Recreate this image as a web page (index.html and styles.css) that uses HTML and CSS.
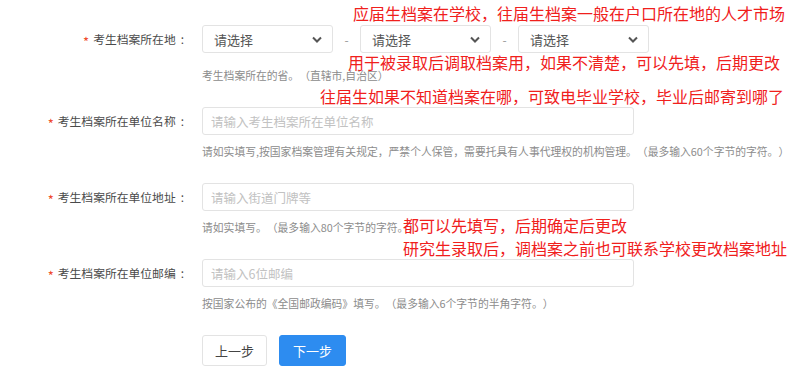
FILE: index.html
```html
<!DOCTYPE html>
<html lang="zh-CN">
<head>
  <meta charset="UTF-8" />
  <meta name="viewport" content="width=device-width, initial-scale=1.0"/>
  <title>考生档案信息</title>
  <link rel="stylesheet" href="styles.css">
</head>
<body>
  <div class="page">
    <form class="form">
      <div class="row">
        <label class="label"><span class="req">*</span>考生档案所在地<span class="colon">:</span></label>
        <div class="field">
          <div class="selects">
            <div class="select">请选择<svg class="arrow" width="10" height="7" viewBox="0 0 10 7"><polyline points="1,1.5 5,5.5 9,1.5" /></svg></div>
            <span class="dash">-</span>
            <div class="select">请选择<svg class="arrow" width="10" height="7" viewBox="0 0 10 7"><polyline points="1,1.5 5,5.5 9,1.5" /></svg></div>
            <span class="dash">-</span>
            <div class="select">请选择<svg class="arrow" width="10" height="7" viewBox="0 0 10 7"><polyline points="1,1.5 5,5.5 9,1.5" /></svg></div>
          </div>
          <p class="hint hint-first">考生档案所在的省。（直辖市,自治区）</p>
        </div>
      </div>

      <div class="row">
        <label class="label"><span class="req">*</span>考生档案所在单位名称<span class="colon">:</span></label>
        <div class="field">
          <input class="input" type="text" placeholder="请输入考生档案所在单位名称">
          <p class="hint">请如实填写,按国家档案管理有关规定，严禁个人保管，需要托具有人事代理权的机构管理。（最多输入60个字节的字符。）</p>
        </div>
      </div>

      <div class="row">
        <label class="label"><span class="req">*</span>考生档案所在单位地址<span class="colon">:</span></label>
        <div class="field">
          <input class="input" type="text" placeholder="请输入街道门牌等">
          <p class="hint">请如实填写。（最多输入80个字节的字符。）</p>
        </div>
      </div>

      <div class="row">
        <label class="label"><span class="req">*</span>考生档案所在单位邮编<span class="colon">:</span></label>
        <div class="field">
          <input class="input" type="text" placeholder="请输入6位邮编">
          <p class="hint">按国家公布的《全国邮政编码》填写。（最多输入6个字节的半角字符。）</p>
        </div>
      </div>

      <div class="actions">
        <button type="button" class="btn">上一步</button>
        <button type="button" class="btn btn-primary">下一步</button>
      </div>
    </form>

    <!-- 截图上的红字批注 -->
    <p class="note note-1">应届生档案在学校，往届生档案一般在户口所在地的人才市场</p>
    <p class="note note-2">用于被录取后调取档案用，如果不清楚，可以先填，后期更改</p>
    <p class="note note-3">往届生如果不知道档案在哪，可致电毕业学校，毕业后邮寄到哪了</p>
    <p class="note note-4">都可以先填写，后期确定后更改</p>
    <p class="note note-5">研究生录取后，调档案之前也可联系学校更改档案地址</p>
  </div>
</body>
</html>
```

FILE: styles.css
```css
body { margin: 0; background: #fff; font-family: "Noto Sans CJK SC", "Noto Sans", sans-serif; color: #444; text-spacing-trim: space-all; }
.page { position: relative; width: 794px; height: 383px; overflow: hidden; }
.form { padding-top: 25px; }
.row { display: flex; align-items: flex-start; margin-bottom: 24px; }
.label { width: 184px; height: 28px; line-height: 28px; padding-right: 18px; text-align: right; font-size: 11.8px; color: #4a4a4a; }
.colon { margin-left: 5px; }
.req { color: #ef4a2c; margin-right: 4px; font-size: 13px; vertical-align: -3px; }
.field { display: flex; flex-direction: column; }
.selects { display: flex; align-items: center; }
.select { box-sizing: border-box; width: 131px; height: 28px; padding: 0 10px 0 11px; border: 1px solid #e3e3e3; border-radius: 3px; display: flex; align-items: center; justify-content: space-between; font-size: 13px; color: #555; }
.arrow polyline { fill: none; stroke: #555; stroke-width: 2; }
.dash { width: 27px; text-align: center; font-size: 12px; color: #999; }
.input { box-sizing: border-box; width: 432px; height: 28px; margin: 0; padding: 0 8px; border: 1px solid #e3e3e3; border-radius: 3px; font-family: inherit; font-size: 12.5px; color: #444; outline: none; }
.input::placeholder { color: #c2c2c2; }
.hint { margin: 8px 0 0; line-height: 16px; font-size: 10.8px; color: #8c8c8c; white-space: nowrap; }
.hint-first { margin-top: 14px; }
.actions { display: flex; gap: 12px; padding-left: 202px; margin-top: 1px; }
.btn { box-sizing: border-box; width: 65px; height: 31px; border: 1px solid #e3e3e3; border-radius: 3px; background: #fff; font-family: inherit; font-size: 13px; color: #444; }
.btn-primary { width: 67px; background: #2d8cf0; border-color: #2d8cf0; color: #fff; }
.note { position: absolute; margin: 0; line-height: 18px; font-size: 16px; color: #f0201c; white-space: nowrap; }
.note-1 { top: 4px; left: 353px; }
.note-2 { top: 53px; left: 348px; }
.note-3 { top: 87px; left: 320px; }
.note-4 { top: 216px; left: 403px; }
.note-5 { top: 239px; left: 403px; }
```
